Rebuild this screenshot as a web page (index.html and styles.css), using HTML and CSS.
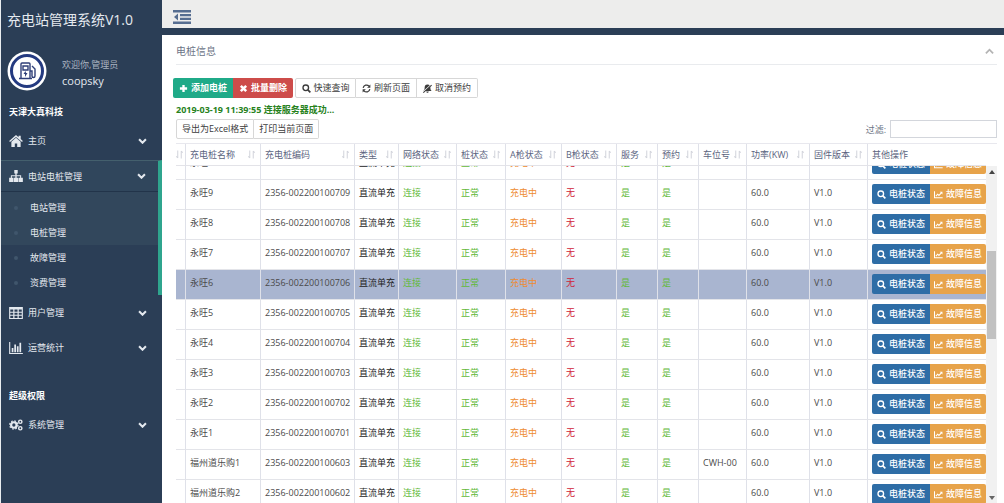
FILE: index.html
```html
<!DOCTYPE html>
<html lang="zh-CN">
<head>
<meta charset="utf-8">
<title>充电站管理系统V1.0</title>
<link rel="stylesheet" href="styles.css">
</head>
<body>
<svg class="sprite" aria-hidden="true">
  <symbol id="i-home" viewBox="0 0 16 14"><path d="M8 0 0 7l1 1.200L8 2.200l7 6L16 7l-2.500-2.200V1H11v1.600zM8 3.300 2.600 8v6h4v-4h2.800v4h4V8z"/></symbol>
  <symbol id="i-tree" viewBox="0 0 16 14"><path d="M6 0h4v4H8.800v2H14v3h2v5h-5V9h1.800V7.200H8.800V9h1.700v5h-5V9h1.700V7.200h-4V9H5v5H0V9h2V6h5.200V4H6z"/></symbol>
  <symbol id="i-table" viewBox="0 0 16 14"><path fill-rule="evenodd" d="M0 0h16v14H0zM1.300 3h3.500v2.500H1.300zM6.200 3h3.600v2.500H6.200zM11.200 3h3.500v2.500h-3.500zM1.300 6.700h3.500V9H1.300zM6.200 6.700h3.600V9H6.200zM11.200 6.700h3.500V9h-3.500zM1.300 10.300h3.500v2.400H1.300zM6.200 10.300h3.600v2.400H6.200zM11.200 10.300h3.500v2.400h-3.500z"/></symbol>
  <symbol id="i-bars" viewBox="0 0 16 14"><path d="M0 0h1.300v12.700H16V14H0zM3 7h2v5H3zM6 3h2v9H6zM9 5h2v7H9zM12 1h2v11h-2z"/></symbol>
  <symbol id="i-cogs" viewBox="0 0 16 14"><circle cx="5.500" cy="7" r="3.200" fill="none" stroke="currentColor" stroke-width="2.600"/><circle cx="5.500" cy="7" r="4.800" fill="none" stroke="currentColor" stroke-width="1.400" stroke-dasharray="1.885 1.885"/><circle cx="13" cy="3.200" r="1.900" fill="none" stroke="currentColor" stroke-width="1.700"/><circle cx="13" cy="10.800" r="1.900" fill="none" stroke="currentColor" stroke-width="1.700"/></symbol>
  <symbol id="i-down" viewBox="0 0 10 7"><path d="m1 1.500 4 4 4-4" fill="none" stroke="currentColor" stroke-width="2.400"/></symbol>
  <symbol id="i-up" viewBox="0 0 10 7"><path d="m1 5.500 4-4 4 4" fill="none" stroke="currentColor" stroke-width="2"/></symbol>
  <symbol id="i-plus" viewBox="0 0 10 10"><path d="M3.700 1h2.600v2.700H9v2.600H6.300V9H3.700V6.300H1V3.700h2.700z"/></symbol>
  <symbol id="i-times" viewBox="0 0 10 10"><path d="m2 2 6 6M8 2 2 8" fill="none" stroke="currentColor" stroke-width="2.800"/></symbol>
  <symbol id="i-search" viewBox="0 0 10 10"><circle cx="4.200" cy="4.200" r="3.100" fill="none" stroke="currentColor" stroke-width="1.500"/><path d="m6.500 6.500 2.800 2.800" stroke="currentColor" stroke-width="1.900"/></symbol>
  <symbol id="i-refresh" viewBox="0 0 10 10"><path d="M1.300 4.300a3.800 3.800 0 0 1 6.500-1.900M8.700 5.700a3.800 3.800 0 0 1-6.500 1.900" fill="none" stroke="currentColor" stroke-width="1.400"/><path d="M9.300.6v3.600H5.700zM.7 9.400V5.800h3.600z"/></symbol>
  <symbol id="i-mute" viewBox="0 0 10 10"><path d="M5 .6c2.600 0 3.200 1.800 3.200 3.900 0 1.500.5 2.300 1.300 3.200h-9C1.300 6.800 1.800 6 1.800 4.500 1.800 2.400 2.400.6 5 .6zM3.600 8.200h2.800c-.2 1.900-2.600 1.900-2.800 0z"/><path d="m.2 8.600 9-8" stroke="#fff" stroke-width="1.200"/><path d="m.3 9.600 9.300-8.400" stroke="currentColor" stroke-width="1.200"/></symbol>
  <symbol id="i-line" viewBox="0 0 11 10"><path d="M.6 1v8h10M2.300 7l2.200-2.400 1.500 1.500L9 3" fill="none" stroke="currentColor" stroke-width="1.300"/><path d="M7 1.600h3.300v3.300z"/></symbol>
  <symbol id="i-sort" viewBox="0 0 8 9"><path d="M2 0v8.500M6 .5V9M.3 6.500 2 8.500M7.700 2.500 6 .5" fill="none" stroke="currentColor" stroke-width="1.200"/></symbol>
</svg>
<div class="app">
  <aside class="sidebar">
    <h1 class="brand">充电站管理系统V1.0</h1>
    <div class="profile">
      <svg class="avatar" viewBox="0 0 40 40" aria-hidden="true">
        <circle cx="20" cy="20" r="19.500" fill="#fff"/><circle cx="20" cy="20" r="15.500" fill="#fff" stroke="#243a80" stroke-width="3"/>
        <g fill="none" stroke="#2f3f78" stroke-width="1.400"><path d="M14 27V13q0-1 1-1h7q1 0 1 1v14M12 27.500h13M16 15h5v4h-5zM23 20h2v5q0 1.500 1.500 1.500T28 25v-7l-3-3"/></g><path d="m18.500 20-2 3h1.500v3l2.500-4H19z" fill="#2f3f78"/>
      </svg>
      <div><p class="welcome">欢迎你,管理员</p><p class="user">coopsky</p></div>
    </div>
    <nav>
      <h2 class="group">天津大真科技</h2>
      <a class="item tall" href="#"><svg class="nav-icon"><use href="#i-home"/></svg>主页<svg class="chev"><use href="#i-down"/></svg></a>
      <div class="open">
        <a class="item" href="#"><svg class="nav-icon"><use href="#i-tree"/></svg>电站电桩管理<svg class="chev"><use href="#i-down"/></svg></a>
        <ul class="sub">
          <li class="lit"><a href="#">电站管理</a></li>
          <li class="lit"><a href="#">电桩管理</a></li>
          <li><a href="#">故障管理</a></li>
          <li><a href="#">资费管理</a></li>
        </ul>
      </div>
      <a class="item mid" href="#"><svg class="nav-icon"><use href="#i-table"/></svg>用户管理<svg class="chev"><use href="#i-down"/></svg></a>
      <a class="item mid" href="#"><svg class="nav-icon"><use href="#i-bars"/></svg>运营统计<svg class="chev"><use href="#i-down"/></svg></a>
      <h2 class="group second">超级权限</h2>
      <a class="item tall" href="#"><svg class="nav-icon"><use href="#i-cogs"/></svg>系统管理<svg class="chev"><use href="#i-down"/></svg></a>
    </nav>
  </aside>
  <main class="main">
    <header class="topbar">
      <button class="toggle" aria-label="收起菜单"><svg viewBox="0 0 18 14"><path fill="#566d90" d="M0 0h18v2.500H0zM7 4h11v2.300H7zM7 7.800h11V10H7zM0 11.500h18V14H0zM5 3.500v7L1 7z"/></svg></button>
    </header>
    <section class="panel">
      <div class="panel-head"><h2>电桩信息</h2><button class="fold" aria-label="折叠"><svg><use href="#i-up"/></svg></button></div>
      <div class="toolbar">
        <div class="btns"><button class="btn add"><svg><use href="#i-plus"/></svg>添加电桩</button><button class="btn del"><svg><use href="#i-times"/></svg>批量删除</button></div>
        <div class="btns plain"><button class="btn"><svg><use href="#i-search"/></svg>快速查询</button><button class="btn"><svg><use href="#i-refresh"/></svg>刷新页面</button><button class="btn"><svg><use href="#i-mute"/></svg>取消预约</button></div>
      </div>
      <p class="log">2019-03-19 11:39:55 连接服务器成功...</p>
      <div class="tools">
        <div class="btns plain export"><button class="btn">导出为Excel格式</button><button class="btn">打印当前页面</button></div>
        <div class="filter"><label for="filter">过滤:</label><input id="filter" type="text"></div>
      </div>
      <div class="grid-head"><table class="grid"><colgroup></colgroup><thead><tr id="head"></tr></thead></table></div>
      <div class="scroller">
        <div class="viewport"><table class="grid body"><colgroup></colgroup><tbody id="rows"></tbody></table></div>
        <div class="scrollbar" aria-hidden="true"><i class="arrow up"></i><i class="thumb"></i><i class="arrow down"></i></div>
      </div>
    </section>
  </main>
</div>
<script src="app.js"></script>
</body>
</html>
```
FILE: app.js
```
const heads = ["", "充电桩名称", "充电桩编码", "类型", "网络状态", "桩状态", "A枪状态", "B枪状态", "服务", "预约", "车位号", "功率(KW)", "固件版本", "其他操作"];
const rows = [];
for (let n = 10; n >= 1; n--) rows.push(["永旺" + n, "2356-0022001007" + String(n).padStart(2, "0"), ""]);
rows.push(["福州道乐购1", "2356-002200100603", "CWH-00"], ["福州道乐购2", "2356-002200100602", ""]);

document.querySelectorAll("colgroup").forEach(g => {
  g.innerHTML = heads.map((_, i) => `<col class="c${i}">`).join("");
});
document.getElementById("head").innerHTML = heads.map((h, i) =>
  `<th scope="col"><span class="th">${h}${i < 13 ? '<svg class="sort"><use href="#i-sort"/></svg>' : ""}</span></th>`).join("");
document.getElementById("rows").innerHTML = rows.map(([name, code, slot]) =>
  `<tr${name === "永旺6" ? ' class="selected"' : ""}><td></td><td>${name}</td><td>${code}</td><td class="type">直流单充</td>` +
  `<td class="ok">连接</td><td class="ok">正常</td><td class="busy">充电中</td><td class="none">无</td><td class="ok">是</td><td class="ok">是</td>` +
  `<td>${slot}</td><td>60.0</td><td>V1.0</td><td class="ops"><div class="btns"><button class="btn state"><svg><use href="#i-search"/></svg>电桩状态</button>` +
  `<button class="btn fault"><svg><use href="#i-line"/></svg>故障信息</button></div></td></tr>`).join("");
```
FILE: styles.css
```css
* { box-sizing: border-box; }
body { margin: 0; font: 9px/13px "Open Sans", "Noto Sans CJK SC", sans-serif; color: #4a4a4a; background: #fff; }
h1, h2, p, ul { margin: 0; padding: 0; font-weight: 400; }
ul { list-style: none; }
a { color: inherit; text-decoration: none; }
button, input { font: inherit; color: inherit; }
svg { fill: currentColor; flex: none; }
.sprite { display: none; }
.app { display: flex; height: 100vh; overflow: hidden; }

.sidebar { width: 162px; flex: none; background: #2b3e56; color: #e4e9ef; border-left: 1px solid #e9edf0; }
.brand { font-size: 14px; line-height: 40px; padding-left: 6px; white-space: nowrap; }
.profile { display: flex; align-items: center; gap: 15px; margin-top: 11px; padding-left: 6px; }
.avatar { width: 40px; height: 40px; }
.welcome { color: #aab4c1; line-height: 14px; padding-top: 6px; }
.user { font-size: 11px; line-height: 18px; }
.group { font-size: 9px; font-weight: 700; line-height: 18px; margin-top: 12px; padding-left: 8px; color: #fff; }
.second { margin-top: 22px; }
.item { display: flex; align-items: center; height: 32px; padding: 0 15px 0 8px; }
.tall { height: 39px; }
.mid { height: 35px; }
.nav-icon { width: 14px; height: 12px; margin-right: 5px; }
.chev { width: 9px; height: 6px; margin-left: auto; }
.open { border-right: 4px solid #2fa58e; border-top: 1px solid #44606d; }
.open .item { height: 31px; padding-right: 12px; background: #30465c; border-bottom: 1px solid #22344a; }
.sub li { height: 25px; line-height: 25px; padding-left: 13px; display: flex; align-items: center; gap: 12px; }
.sub li::before { content: ""; width: 4px; height: 4px; border-radius: 50%; background: #40566c; }
.sub .lit { background: #32475c; }
.sub li:first-child { height: 28px; padding-top: 3px; }

.main { flex: 1; min-width: 0; display: flex; flex-direction: column; }
.topbar { flex: none; height: 35px; padding: 10px 11px 0; background: #ededec; border-bottom: 7px solid #2b3e56; }
.toggle, .fold { display: block; border: 0; padding: 0; background: none; }
.toggle svg { display: block; width: 18px; height: 14px; }
.panel { flex: 1; min-height: 0; display: flex; flex-direction: column; padding: 0 7px 0 14px; }
.panel-head { flex: none; height: 30px; padding-top: 3px; display: flex; align-items: center; justify-content: space-between; border-bottom: 1px solid #e9ebee; color: #6c7486; }
.panel-head h2 { font-size: 10px; }
.fold { color: #b4b4b4; }
.fold svg { display: block; width: 9px; height: 7px; margin-right: 3px; }
.toolbar { display: flex; gap: 2px; margin: 13px 0 0 -3px; }
.btns { display: flex; }
.btn { display: flex; align-items: center; justify-content: center; gap: 3px; height: 20px; padding: 0 7px; border: 0; color: #fff; white-space: nowrap; line-height: 18px; }
.btn svg { width: 9px; height: 9px; }
.btn:first-child { border-radius: 2px 0 0 2px; }
.btn:last-child { border-radius: 0 2px 2px 0; }
.add, .del { width: 60px; font-weight: 700; }
.add { background: #1faa88; }
.del { background: #cd4c4a; }
.plain .btn { width: 61px; background: #fff; border: 1px solid #d7d7d7; color: #3c3c3c; }
.plain .btn + .btn { border-left: 0; }
.log { color: #27821c; font-weight: 700; line-height: 12px; margin-top: 6px; }
.tools { display: flex; justify-content: space-between; margin: 3px 0 4px; }
.tools .export .btn { width: auto; padding: 0 5px; }
.filter { display: flex; align-items: center; gap: 4px; color: #6c7486; }
.filter input { width: 107px; height: 18px; padding: 0 4px; border: 1px solid #d3d6dc; }

.grid { width: 100%; table-layout: fixed; border-collapse: separate; border-spacing: 0; }
.grid-head { flex: none; padding-right: 11px; border-top: 1px solid #e8e8ee; }
.grid th, .grid td { padding: 0 0 0 4px; text-align: left; border-right: 1px solid #dfe1e9; white-space: nowrap; overflow: hidden; }
.grid th { height: 22px; font-weight: 400; color: #5b6480; border-bottom: 1px solid #e3e3e8; }
.grid th:first-child { padding-left: 0; }
.grid th:last-child, .grid td:last-child { border-right: 0; }
.th { display: flex; align-items: center; justify-content: space-between; padding-right: 5px; }
.sort { width: 7px; height: 9px; color: #d3d5dc; }
.c0 { width: 10px; }
.c1 { width: 75px; }
.c2 { width: 94px; }
.c3 { width: 44px; }
.c4 { width: 58px; }
.c5 { width: 49px; }
.c6 { width: 56px; }
.c7 { width: 55px; }
.c8, .c9 { width: 41px; }
.c10 { width: 48px; }
.c11 { width: 63px; }
.c12 { width: 58px; }
.scroller { flex: 1; min-height: 0; display: flex; }
.viewport { flex: 1; min-width: 0; overflow: hidden; }
.body { margin-top: -16px; }
.grid td { height: 30px; padding-top: 6px; vertical-align: top; border-bottom: 1px solid #e3e4e9; }
.grid td.ops { padding-top: 4px; }
.grid .ok { color: #62b93a; }
.grid .busy { color: #ee8b30; }
.grid .none { color: #d02338; }
.grid .type { color: #222; }
.selected td { background: #a9b5d0; }
.ops .btn { padding: 0 3px; font-weight: 500; }
.ops .state { width: 58px; flex: none; background: #2e6da6; }
.ops .fault { flex: 1; background: #e7a34a; }
.scrollbar { width: 11px; flex: none; padding: 4px 1px 3px; background: #f1f1f1; display: flex; flex-direction: column; align-items: center; }
.arrow { border: 3px solid transparent; border-top-width: 0; border-bottom: 4px solid #444; }
.arrow.down { border-top: 4px solid #666; border-bottom-width: 0; margin-top: auto; }
.thumb { width: 9px; height: 88px; margin-top: 77px; background: #c1c1c1; }
```
